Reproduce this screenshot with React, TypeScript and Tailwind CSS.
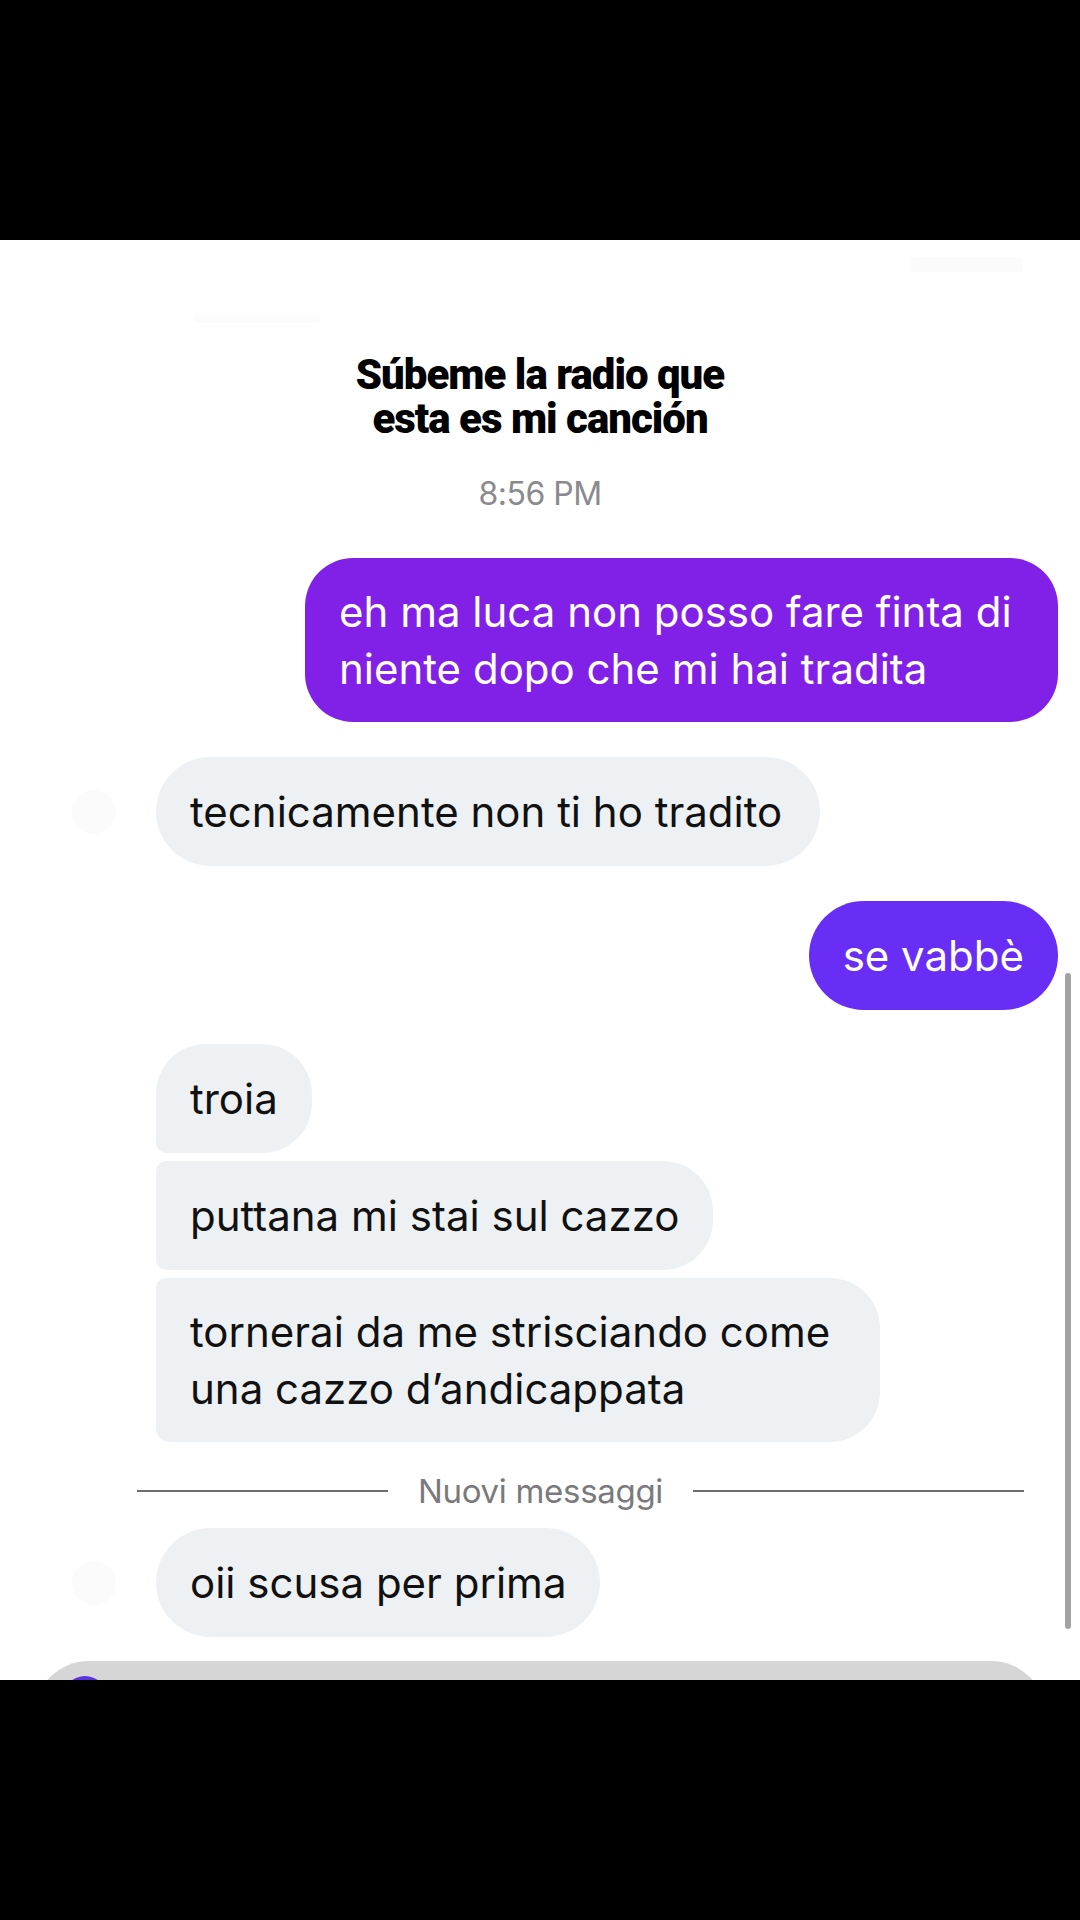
import React from "react";

const body = { fontFamily: "Inter, 'Noto Sans', sans-serif" } as React.CSSProperties;

export default function App() {
  return (
    <div className="w-[1080px] h-[1920px] bg-black flex flex-col" style={body}>
      <div className="h-[240px] shrink-0 bg-black" />
      <div className="relative h-[1440px] shrink-0 bg-white overflow-hidden flex flex-col">
        {/* faint ghost header remnants */}
        <div className="absolute left-[911px] top-[17px] w-[112px] h-[15px] bg-[#fbfbfb] rounded" />
        <div className="absolute left-[193px] top-[75px] w-[128px] h-[8px] bg-[#fcfcfc] rounded" />

        {/* title */}
        <p
          className="pt-[113px] pb-[1px] text-center text-[42px] leading-[44px] font-black text-black tracking-[-1px]"
          style={{ fontFamily: "Roboto, 'Liberation Sans', sans-serif" }}
        >
          Súbeme la radio que
          <br />
          esta es mi canción
        </p>

        <div className="mt-[34px] text-center text-[32px] leading-[36px] text-[#8a8a8e] tracking-[-0.5px]">8:56 PM</div>

        {/* purple 1 */}
        <div className="mt-[46px] flex justify-end pr-[22px]">
          <div className="w-[753px] bg-[#8121e8] text-white text-[42px] leading-[57px] rounded-[48px] pl-[34px] pr-[14px] py-[25px]">
            eh ma luca non posso fare finta di niente dopo che mi hai tradita
          </div>
        </div>

        {/* gray 1 */}
        <div className="mt-[35px] flex items-center pl-[72px] gap-[40px]">
          <div className="w-[44px] h-[44px] rounded-full bg-[#fbfbfb]" />
          <div className="bg-[#eef1f4] text-[#111] text-[42px] leading-[57px] rounded-[55px] pl-[34px] pr-[38px] py-[26px]">
            tecnicamente non ti ho tradito
          </div>
        </div>

        {/* purple 2 */}
        <div className="mt-[35px] flex justify-end pr-[22px]">
          <div className="bg-[#692ef5] text-white text-[42px] leading-[57px] rounded-[55px] px-[34px] py-[26px]">
            se vabbè
          </div>
        </div>

        {/* gray group */}
        <div className="mt-[34px] flex flex-col items-start pl-[156px] gap-[8px]">
          <div className="bg-[#eef1f4] text-[#111] text-[42px] leading-[57px] rounded-tl-[50px] rounded-tr-[50px] rounded-br-[50px] rounded-bl-[10px] px-[34px] py-[26px]">
            troia
          </div>
          <div className="bg-[#eef1f4] text-[#111] text-[42px] leading-[57px] rounded-tl-[10px] rounded-bl-[10px] rounded-tr-[50px] rounded-br-[50px] px-[34px] py-[26px]">
            puttana mi stai sul cazzo
          </div>
          <div className="w-[724px] bg-[#eef1f4] text-[#111] text-[42px] leading-[57px] rounded-tl-[10px] rounded-bl-[14px] rounded-tr-[50px] rounded-br-[50px] pl-[34px] pr-[14px] py-[25px]">
            tornerai da me strisciando come una cazzo d’andicappata
          </div>
        </div>

        {/* divider */}
        <div className="mt-[33px] flex items-center pl-[137px]">
          <div className="w-[251px] h-[2px] bg-[#6e6e6e]" />
          <div className="w-[305px] text-center text-[33px] leading-[32px] text-[#7a7a7e] tracking-[-0.3px]">Nuovi messaggi</div>
          <div className="w-[331px] h-[2px] bg-[#6e6e6e]" />
        </div>

        {/* last */}
        <div className="mt-[21px] flex items-center pl-[72px] gap-[40px]">
          <div className="w-[44px] h-[44px] rounded-full bg-[#fbfbfb]" />
          <div className="bg-[#eef1f4] text-[#111] text-[42px] leading-[57px] rounded-[55px] px-[34px] py-[26px]">
            oii scusa per prima
          </div>
        </div>

        {/* input bar */}
        <div className="mt-[24px] mx-[34px] h-[110px] shrink-0 rounded-[55px] bg-[#d6d6d6] flex items-start pl-[29px] pt-[15px]">
          <div className="w-[44px] h-[44px] rounded-full bg-[#5b34e0]" />
        </div>

        {/* scrollbar */}
        <div className="absolute left-[1065px] top-[733px] w-[6px] h-[656px] rounded-full bg-[#a3a3a3]" />
      </div>
      <div className="h-[240px] shrink-0 bg-black" />
    </div>
  );
}
